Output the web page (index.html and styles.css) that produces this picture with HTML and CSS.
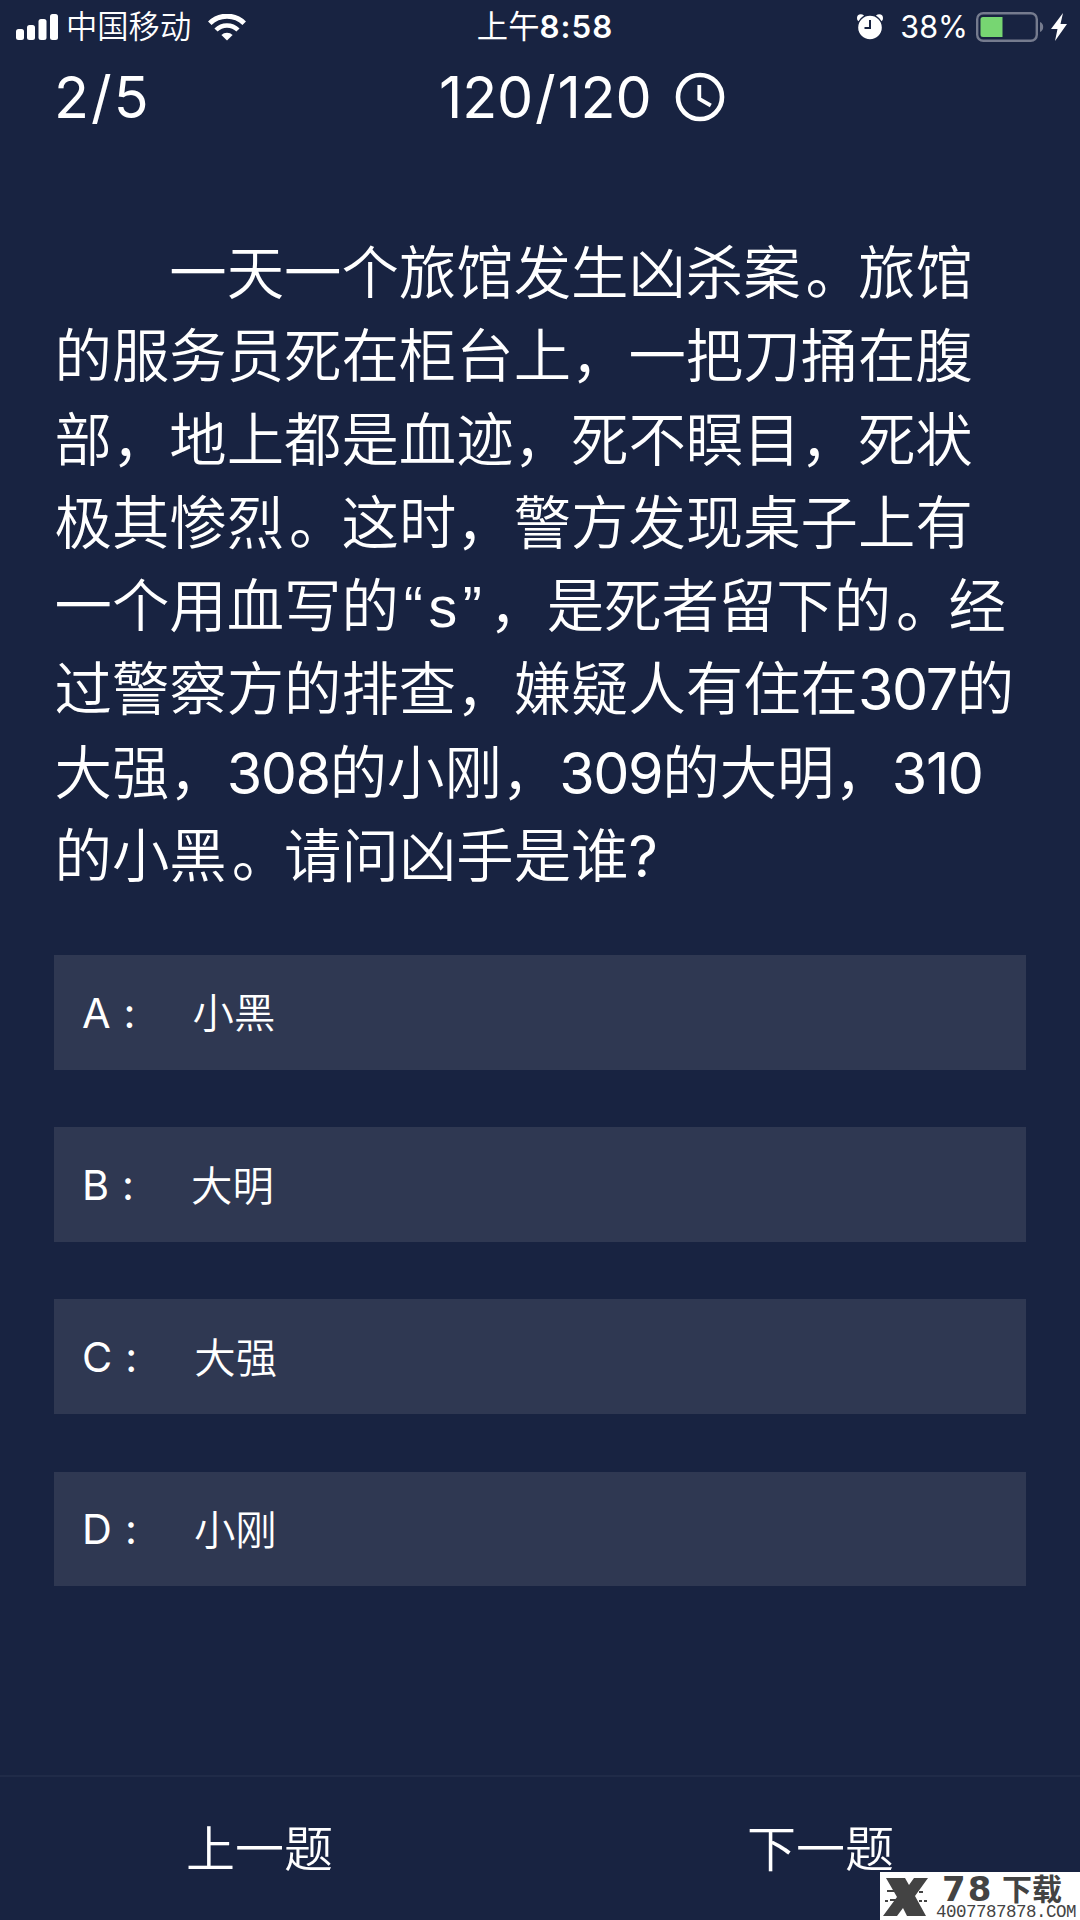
FILE: index.html
```html
<!DOCTYPE html>
<html lang="zh-CN">
<head>
    <meta charset="UTF-8">
    <meta name="viewport" content="width=device-width, initial-scale=1.0">
    <title>推理答题</title>
    <link rel="stylesheet" href="styles.css">
</head>
<body>
    <div class="status-bar">
        <div class="status-left">
            <svg class="signal" width="42" height="26" viewBox="0 0 42 26" fill="#fff">
                <rect x="0" y="15" width="8" height="11" rx="2.5"/>
                <rect x="11" y="11" width="8" height="15" rx="2.5"/>
                <rect x="22.5" y="5" width="8" height="21" rx="2.5"/>
                <rect x="34" y="0" width="8" height="26" rx="2.5"/>
            </svg>
            <span class="carrier">中国移动</span>
            <svg class="wifi" width="38" height="27" viewBox="0 0 38 27">
                <path d="M1.8 9.2a24.5 24.5 0 0 1 34.4 0" fill="none" stroke="#fff" stroke-width="5"/>
                <path d="M8 16a15.5 15.5 0 0 1 22 0" fill="none" stroke="#fff" stroke-width="4.5"/>
                <path d="M19 26.5l-5.6-5.4a8 8 0 0 1 11.2 0z" fill="#fff"/>
            </svg>
        </div>
        <div class="status-time">上午<b>8:58</b></div>
        <div class="status-right">
            <svg class="alarm" width="26" height="26" viewBox="0 0 26 26">
                <circle cx="3.8" cy="4" r="3.8" fill="#fff"/>
                <circle cx="22.2" cy="4" r="3.8" fill="#fff"/>
                <circle cx="13" cy="13.5" r="12.5" fill="#fff" stroke="#182341" stroke-width="1.4"/>
                <path d="M13 6v8H7.5" fill="none" stroke="#182341" stroke-width="2"/>
            </svg>
            <span class="percent">38%</span>
            <svg class="battery" width="68" height="30" viewBox="0 0 68 30">
                <rect x="1.2" y="1.2" width="59.6" height="27.6" rx="6" fill="none" stroke="#757b8e" stroke-width="2.4"/>
                <path d="M7 5h19.5v20H7a2.5 2.5 0 0 1-2.5-2.5v-15A2.5 2.5 0 0 1 7 5z" fill="#77d672"/>
                <path d="M64 10a5.5 5.5 0 0 1 0 10z" fill="#757b8e"/>
            </svg>
            <svg class="bolt" width="16" height="28" viewBox="0 0 16 28">
                <path d="M12 0L0 16h6.500L4 28 16 11H9.500z" fill="#fff"/>
            </svg>
        </div>
    </div>

    <div class="quiz-header">
        <div class="progress">2<span class="slash">/</span>5</div>
        <div class="timer">
            <div>120<span class="slash">/</span>120</div>
            <svg class="clock" width="50" height="50" viewBox="0 0 50 50" fill="none" stroke="#fff">
                <circle cx="25" cy="25" r="22" stroke-width="4.600"/>
                <path d="M24.300 13v14l11.500 6.500" stroke-width="3.800"/>
            </svg>
        </div>
    </div>

    <div class="question">
        <p class="indent">一天一个旅馆发生凶杀案<span class="stop">。</span>旅馆</p>
        <p>的服务员死在柜台上，一把刀捅在腹</p>
        <p>部，地上都是血迹，死不瞑目，死状</p>
        <p>极其惨烈<span class="stop">。</span>这时，警方发现桌子上有</p>
        <p>一个用血写的<span class="quote">“s”</span>，是死者留下的<span class="stop">。</span>经</p>
        <p>过警察方的排查，嫌疑人有住在<span class="num">307</span>的</p>
        <p>大强，<span class="num">308</span>的小刚，<span class="num">309</span>的大明，<span class="num">310</span></p>
        <p>的小黑<span class="stop">。</span>请问凶手是谁<span class="num">?</span></p>
    </div>

    <div class="options">
        <div class="option"><span class="letter">A</span><span class="colon">:</span><span class="answer">小黑</span></div>
        <div class="option"><span class="letter">B</span><span class="colon">:</span><span class="answer">大明</span></div>
        <div class="option"><span class="letter">C</span><span class="colon">:</span><span class="answer">大强</span></div>
        <div class="option"><span class="letter">D</span><span class="colon">:</span><span class="answer">小刚</span></div>
    </div>

    <div class="footer">
        <div class="nav-button">上一题</div>
        <div class="nav-button">下一题</div>
    </div>

    <div class="watermark">
        <svg class="mark-logo" width="46" height="40" viewBox="0 0 46 40" fill="#434343">
            <path d="M3 1h19l4 7 5-7h14L32 19l11 20H24l-4-8-6 8H0l14-19z"/>
            <path d="M4 13h7v2H4zM7 22h9v2H7zM2 23h3v2H2zM36 23h3v2h-3zM41 23h3v2h-3zM36 14h4v2h-4z"/>
        </svg>
        <div class="mark-text">
            <div class="mark-name"><span>78</span>下载</div>
            <div class="mark-url">4007787878.COM</div>
        </div>
    </div>
</body>
</html>
```

FILE: styles.css
```css
* {
    box-sizing: border-box;
}
body {
    margin: 0;
    width: 1080px;
    height: 1920px;
    overflow: hidden;
    display: flex;
    flex-direction: column;
    background-color: #182341;
    color: #fff;
    font-family: Inter, "Noto Sans CJK SC", sans-serif;
}

/* Phone status bar */
.status-bar {
    height: 54px;
    padding: 0 13px 0 16px;
    display: grid;
    grid-template-columns: 1fr auto 1fr;
    align-items: center;
    font-size: 31.300px;
    line-height: 52px;
}
.status-left,
.status-right {
    display: flex;
    align-items: center;
}
.status-right {
    justify-content: flex-end;
}
.carrier {
    margin-left: 8px;
    font-weight: 350;
}
.wifi {
    margin-left: 17px;
}
.status-time {
    padding-left: 7px;
    font-weight: 400;
}
.status-time b {
    font-weight: 600;
    letter-spacing: 1px;
}
.percent {
    margin: 0 8px 0 17px;
    font-size: 30.500px;
    font-weight: 400;
}
.bolt {
    margin-left: 7px;
}

/* Progress and countdown */
.quiz-header {
    height: 166px;
    padding: 9px 54px 0 54px;
    display: flex;
    font-size: 57.400px;
    font-weight: 400;
    line-height: 68px;
}
.progress {
    width: 385px;
}
.slash {
    margin: 0 2px;
}
.timer {
    display: flex;
    align-items: center;
    height: 68px;
    gap: 24px;
    letter-spacing: -0.2px;
}

/* Question text */
.question {
    padding: 12px 0 0 54.500px;
    height: 735px;
    font-size: 57.400px;
    line-height: 83.300px;
    white-space: nowrap;
    font-weight: 350;
}
.question p {
    margin: 0;
    height: 83.300px;
}
.question .indent {
    text-indent: 2em;
}
.num {
    font-weight: 400;
    letter-spacing: -1.4px;
}
.quote {
    padding: 0 2px 0 5px;
    font-family: "Liberation Sans", Arial, sans-serif;
    letter-spacing: 5.500px;
}
.stop {
    position: relative;
    left: 5px;
}

/* Answers */
.options {
    padding: 0 54px;
    display: flex;
    flex-direction: column;
    gap: 57.400px;
}
.option {
    height: 114.800px;
    padding-left: 28px;
    display: flex;
    align-items: center;
    background-color: #2f3852;
    font-size: 41.400px;
    font-weight: 350;
}
.letter,
.colon {
    padding-top: 1px;
    font-weight: 400;
}
.colon {
    width: 69px;
    margin-left: 13px;
}
.answer {
    padding-bottom: 4px;
}

/* Previous / next */
.footer {
    margin-top: auto;
    height: 145px;
    display: flex;
    border-top: 2px solid #202b48;
    font-size: 49px;
    font-weight: 350;
    line-height: 146px;
}
.nav-button {
    flex: none;
    width: 561px;
    padding-left: 186px;
}

/* Site badge in the corner */
.watermark {
    position: absolute;
    right: 0;
    bottom: 0;
    width: 200px;
    height: 48px;
    padding: 5px 0 0 3px;
    display: flex;
    background-color: #fff;
    color: #434343;
}
.mark-logo {
    flex: none;
}
.mark-name {
    display: flex;
    height: 28px;
    padding-left: 13px;
    font-size: 30px;
    font-weight: 700;
    line-height: 25px;
    white-space: nowrap;
}
.mark-name span {
    width: 60px;
    font-family: "DejaVu Sans", sans-serif;
    font-size: 34px;
    letter-spacing: 2px;
}
.mark-url {
    padding-left: 7px;
    font-family: "Liberation Mono", monospace;
    font-size: 17.500px;
    letter-spacing: -0.5px;
    line-height: 14px;
}
```
